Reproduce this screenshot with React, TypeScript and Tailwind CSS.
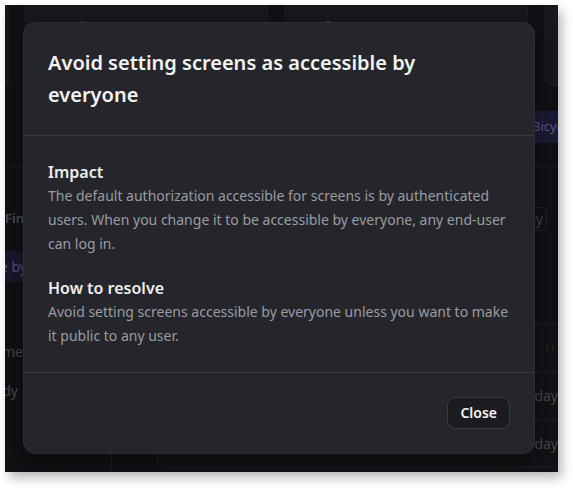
export default function App() {
  return (
    <div
      className="w-[573px] h-[488px] bg-white p-[5px]"
      style={{ fontFamily: '"Noto Sans", "Open Sans", sans-serif' }}
    >
      <div className="relative w-[553px] h-[467px] bg-[#101114] overflow-hidden shadow-[4px_6px_10px_rgba(0,0,0,0.28)]">
        {/* Background page (dimmed) */}
        <div className="flex flex-col h-full">
          {/* cards row */}
          <div className="flex h-[81px] shrink-0">
            <div className="w-[4px] h-full bg-[#18191d] rounded-br-md" />
            <div className="ml-[16px] w-[243px] h-full bg-[#17181c] border border-t-0 border-[#1e1f24] rounded-b-lg pl-[17px] pt-[9px]">
              <span className="text-sm text-[#4a4c53]">Security</span>
            </div>
            <div className="ml-[17px] w-[243px] h-full bg-[#17181c] border border-t-0 border-[#1e1f24] rounded-b-lg pl-[16px] pt-[9px]">
              <span className="text-sm text-[#4a4c53]">Performance</span>
            </div>
            <div className="ml-[17px] flex-1 h-full bg-[#17181c] border border-t-0 border-r-0 border-[#1e1f24] rounded-bl-lg" />
          </div>
          {/* tabs row */}
          <div className="flex justify-end mt-[25px] h-[32px] shrink-0">
            <div className="w-[28px] h-full bg-[#1b1a34] rounded-l-md flex items-center pl-[2px] overflow-hidden">
              <span className="text-[13px] text-[#5d5b86] whitespace-nowrap">Bicycle</span>
            </div>
          </div>
          <div className="h-[24px] border-b border-[#1c1d21] shrink-0" />
          {/* filter row */}
          <div className="flex items-center justify-between mt-[40px] h-[24px] shrink-0">
            <div className="h-full flex items-center">
              <span className="text-[13px] font-semibold text-[#4d4f56]">Find</span>
            </div>
            <div className="h-full w-[60px] mr-[11px] border border-[#24252a] rounded-md flex items-center justify-end pr-[3px] overflow-hidden">
              <span className="text-sm text-[#44464d] whitespace-nowrap">Any day</span>
            </div>
          </div>
          {/* highlighted row */}
          <div className="mt-[20px] h-[31px] w-[120px] bg-[#17182c] flex items-center shrink-0">
            <div className="w-[22px] flex justify-end overflow-hidden">
              <span className="text-sm text-[#52547a] whitespace-nowrap">Accessible by</span>
            </div>
          </div>
          {/* table area */}
          <div className="flex mt-[41px] h-[148px] shrink-0">
            <div className="w-[107px] flex flex-col">
              <div className="mt-[19px] h-[20px] w-[18px] flex items-center justify-end overflow-hidden">
                <span className="text-sm text-[#474950] whitespace-nowrap">Name</span>
              </div>
              <div className="mt-[19px] h-[20px] w-[13px] flex items-center justify-end overflow-hidden">
                <span className="text-sm text-[#474950] whitespace-nowrap">Everybody</span>
              </div>
              <div className="flex-1" />
              <div className="h-[19px] border-r border-[#1d1e22]" />
            </div>
            <div className="ml-[45px] flex-1 h-[145px] border border-r-0 border-[#1d1e22] rounded-bl-lg bg-[#121316] flex flex-col">
              <div className="h-[48px] border-b border-[#1d1e22] flex items-center justify-end pr-[3px]">
                <span className="text-[10px] text-[#3f4147]">↓↑</span>
              </div>
              <div className="h-[48px] border-b border-[#1d1e22] flex items-center justify-end">
                <span className="text-sm text-[#45474e] whitespace-nowrap">Today</span>
              </div>
              <div className="h-[47px] flex items-center justify-end">
                <span className="text-sm text-[#45474e] whitespace-nowrap">Today</span>
              </div>
            </div>
          </div>
        </div>

        {/* Modal */}
        <div className="absolute left-[18px] top-[17px] w-[512px] bg-[#25262b] border border-[#2d2e34] rounded-xl shadow-[0_8px_24px_rgba(0,0,0,0.4)]">
          <div className="px-6 py-6">
            <h2 className="max-w-[420px] text-[20px] leading-8 font-semibold text-[#f3f3f4]">
              Avoid setting screens as accessible by everyone
            </h2>
          </div>
          <div className="border-t border-[#393a40] px-6 py-6">
            <h3 className="text-base leading-6 font-semibold text-[#ededef]">Impact</h3>
            <p className="text-sm leading-6 text-[#9a9ca3]">
              The default authorization accessible for screens is by authenticated users. When you change it to be accessible by everyone, any end-user can log in.
            </p>
            <h3 className="mt-5 text-base leading-6 font-semibold text-[#ededef]">How to resolve</h3>
            <p className="text-sm leading-6 text-[#9a9ca3]">
              Avoid setting screens accessible by everyone unless you want to make it public to any user.
            </p>
          </div>
          <div className="border-t border-[#393a40] px-6 py-6 flex justify-end">
            <button className="h-8 px-3 rounded-lg border border-[#3a3b41] bg-[#1b1c20] text-sm font-semibold text-[#f3f3f4]">
              Close
            </button>
          </div>
        </div>
      </div>
    </div>
  );
}
